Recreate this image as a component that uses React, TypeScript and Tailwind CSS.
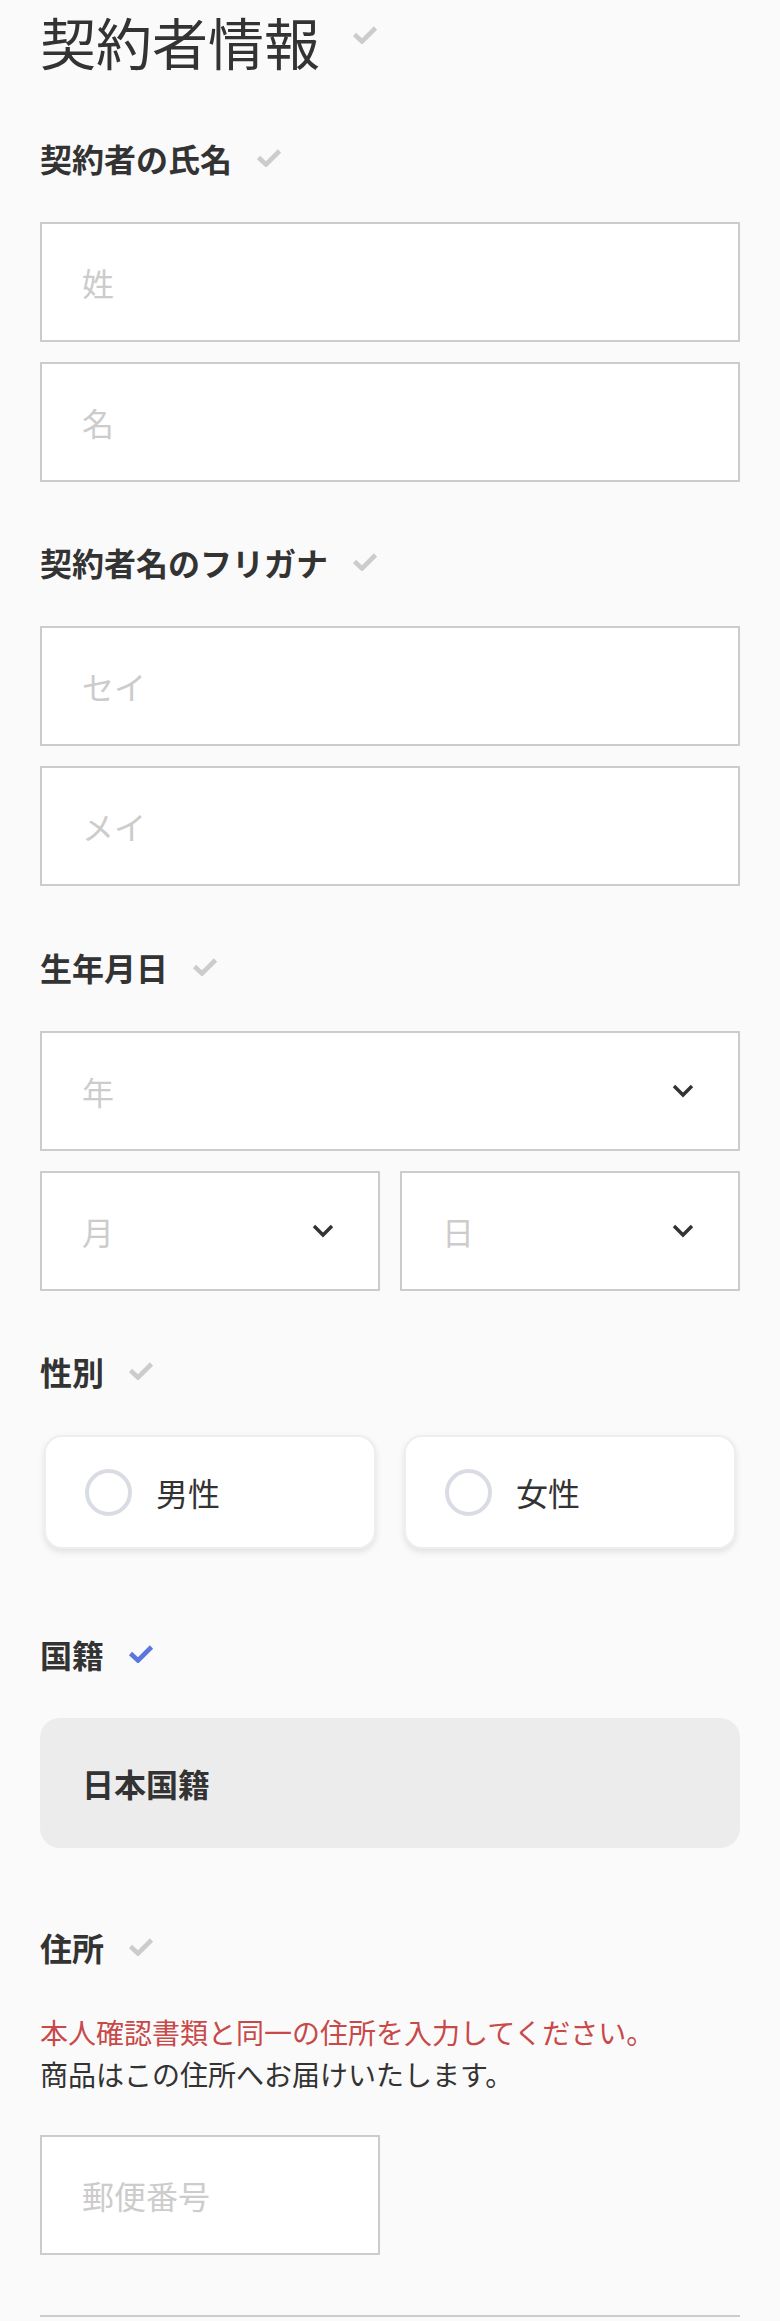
import type { ReactNode } from 'react'

const Check = ({ active = false, className = '' }: { active?: boolean; className?: string }) => (
   <svg width="26" height="18" viewBox="0 0 26 18" className={className} aria-hidden>
      <polyline
         points="2.5,8.5 10,15.5 23.5,2"
         fill="none"
         stroke={active ? '#5b76dc' : '#cccccc'}
         strokeWidth="4.6"
      />
   </svg>
)

const Chevron = () => (
   <svg width="22" height="14" viewBox="0 0 22 14" aria-hidden>
      <polyline points="2,2 11,11 20,2" fill="none" stroke="#333333" strokeWidth="3.4" />
   </svg>
)

const FieldLabel = ({ children, done = false }: { children: ReactNode; done?: boolean }) => (
   <div className="flex items-center gap-6 mb-10">
      <h3 className="text-[32px] leading-[48px] font-bold">{children}</h3>
      <Check active={done} />
   </div>
)

const TextInput = ({ placeholder }: { placeholder: string }) => (
   <input
      type="text"
      placeholder={placeholder}
      className="block w-full h-[120px] border-2 border-[#cccccc] bg-white px-10 text-[32px] outline-none placeholder:text-[#cccccc]"
   />
)

const SelectBox = ({ placeholder }: { placeholder: string }) => (
   <div className="flex items-center justify-between h-[120px] border-2 border-[#cccccc] bg-white pl-10 pr-[44px]">
      <span className="text-[32px] text-[#cccccc]">{placeholder}</span>
      <Chevron />
   </div>
)

const RadioCard = ({ label }: { label: string }) => (
   <label className="mx-1 flex h-[114px] items-center gap-6 rounded-[18px] border-2 border-[#eeeeee] bg-white pl-[39px] shadow-[0_3px_6px_rgba(0,0,0,0.10)]">
      <span className="block size-[47px] rounded-full border-4 border-[#d9dde3]" />
      <span className="text-[32px]">{label}</span>
   </label>
)

export default function App() {
   return (
      <div className="min-h-screen bg-[#fafafa] px-10 font-['Noto_Sans_CJK_JP','Noto_Sans',sans-serif] text-[#333333]">
         <div className="flex items-center gap-8">
            <h2 className="text-[56px] leading-[82px] font-normal">契約者情報</h2>
            <Check className="-mt-3" />
         </div>

         <section className="mt-[52px]">
            <FieldLabel>契約者の氏名</FieldLabel>
            <div className="space-y-5">
               <TextInput placeholder="姓" />
               <TextInput placeholder="名" />
            </div>
         </section>

         <section className="mt-[56px]">
            <FieldLabel>契約者名のフリガナ</FieldLabel>
            <div className="space-y-5">
               <TextInput placeholder="セイ" />
               <TextInput placeholder="メイ" />
            </div>
         </section>

         <section className="mt-[57px]">
            <FieldLabel>生年月日</FieldLabel>
            <div className="space-y-5">
               <SelectBox placeholder="年" />
               <div className="grid grid-cols-2 gap-5">
                  <SelectBox placeholder="月" />
                  <SelectBox placeholder="日" />
               </div>
            </div>
         </section>

         <section className="mt-[56px]">
            <FieldLabel>性別</FieldLabel>
            <div className="grid grid-cols-2 gap-5">
               <RadioCard label="男性" />
               <RadioCard label="女性" />
            </div>
         </section>

         <section className="mt-[81px]">
            <FieldLabel done>国籍</FieldLabel>
            <div className="flex h-[130px] items-center rounded-[20px] bg-[#ececec] px-[42px]">
               <span className="text-[32px] font-bold">日本国籍</span>
            </div>
         </section>

         <section className="mt-[75px]">
            <FieldLabel>住所</FieldLabel>
            <div className="mt-px text-[28px] leading-[42px]">
               <p className="text-[#c94848]">本人確認書類と同一の住所を入力してください。</p>
               <p>商品はこの住所へお届けいたします。</p>
            </div>
            <div className="mt-10 grid grid-cols-2 gap-5">
               <TextInput placeholder="郵便番号" />
            </div>
            <div className="mt-[60px] border-t-2 border-[#cccccc]" />
         </section>
      </div>
   )
}
